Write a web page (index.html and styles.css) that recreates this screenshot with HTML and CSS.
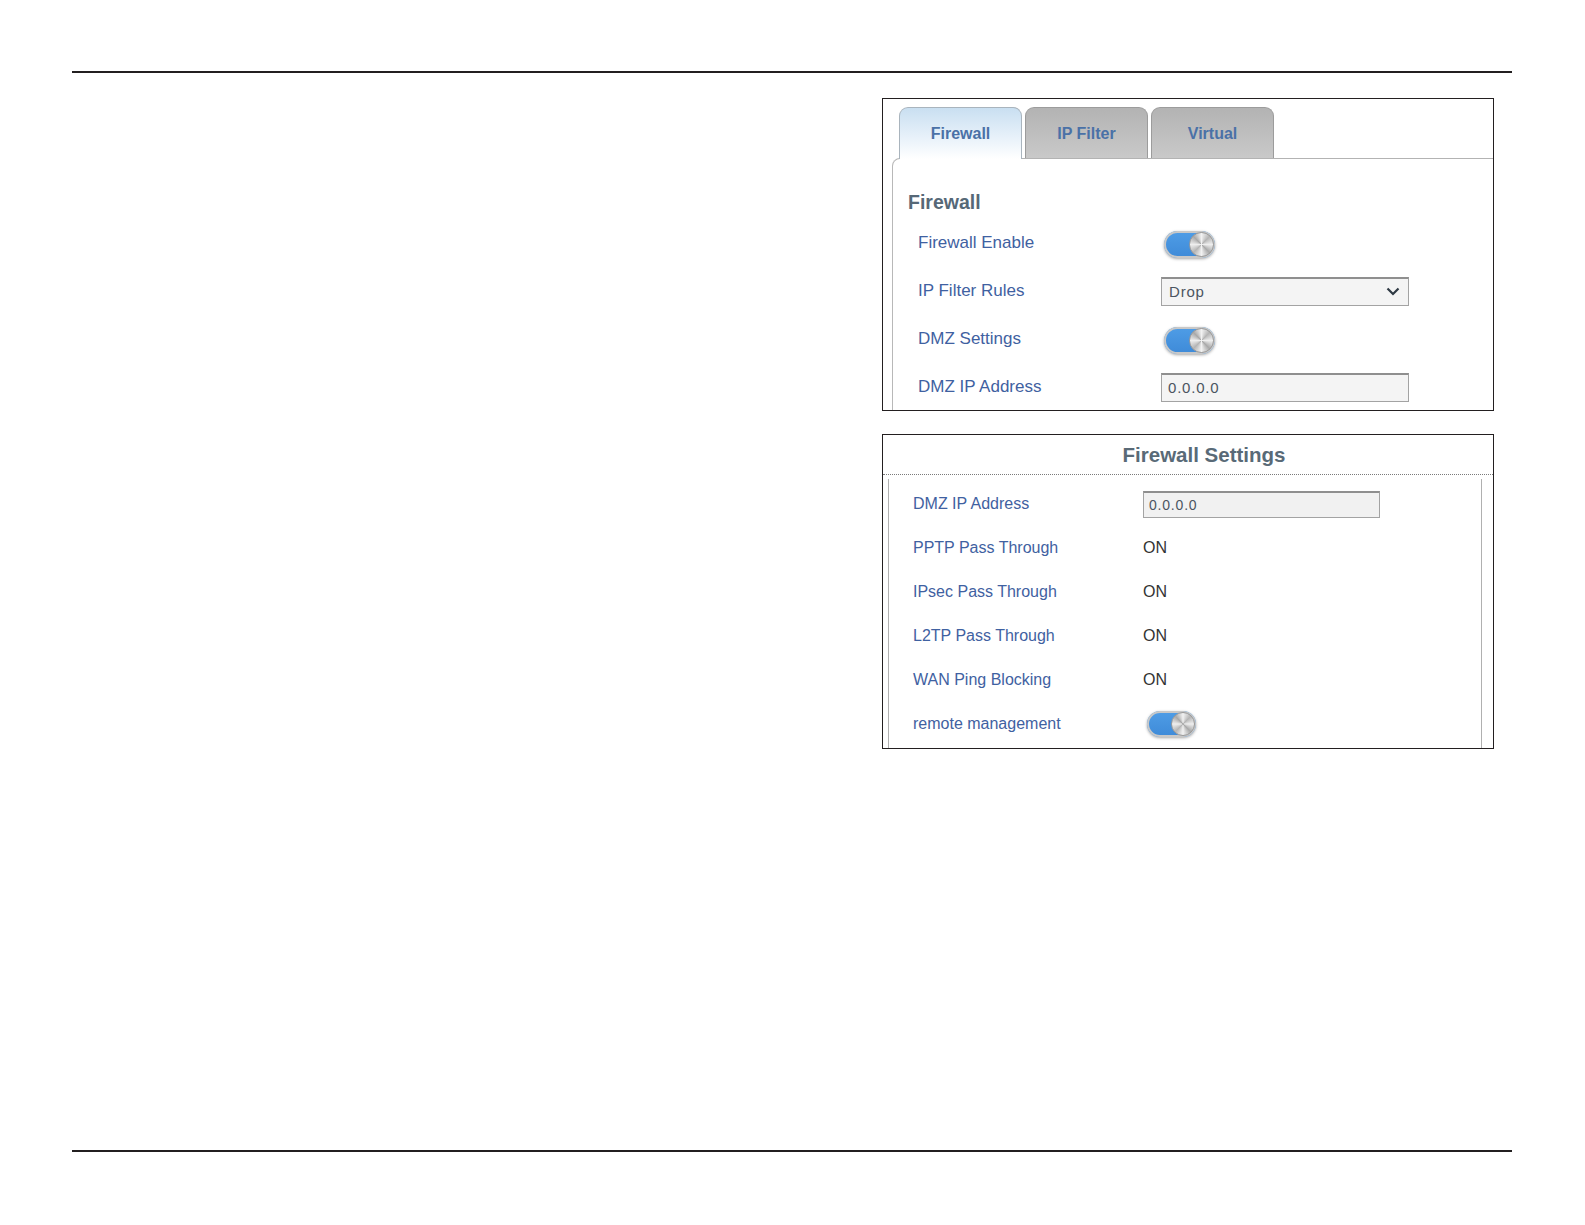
FILE: index.html
```html
<!DOCTYPE html>
<html lang="en">

<head>
    <meta charset="UTF-8">
    <meta name="viewport" content="width=device-width, initial-scale=1.0">
    <title>Firewall</title>

    <link rel="stylesheet" href="styles.css">

</head>

<body>

    <div class="page">
        <div class="rule"></div>

        <div class="main">
            <div class="shots">

                <!-- firewall tab -->
                <div class="shot shot-tabs">
                    <div class="tabs">
                        <div class="tab active"> Firewall </div>
                        <div class="tab"> IP Filter </div>
                        <div class="tab"> Virtual </div>
                        <div class="tab-fill"></div>
                    </div>
                    <div class="tab-body">
                        <h2> Firewall </h2>
                        <div class="row">
                            <span class="label"> Firewall Enable </span>
                            <span class="toggle"><span class="knob"></span></span>
                        </div>
                        <div class="row">
                            <span class="label"> IP Filter Rules </span>
                            <div class="field select">
                                <span> Drop </span>
                                <svg width="14" height="9" viewBox="0 0 14 9">
                                    <path d="M1.5 1.5 L7 7 L12.5 1.5" fill="none" stroke="#2f3a44" stroke-width="2.2" />
                                </svg>
                            </div>
                        </div>
                        <div class="row">
                            <span class="label"> DMZ Settings </span>
                            <span class="toggle"><span class="knob"></span></span>
                        </div>
                        <div class="row">
                            <span class="label"> DMZ IP Address </span>
                            <div class="field"> 0.0.0.0 </div>
                        </div>
                    </div>
                </div>

                <!-- firewall settings summary -->
                <div class="shot shot-settings">
                    <div class="settings-head"> Firewall Settings </div>
                    <div class="settings-body">
                        <div class="srow">
                            <span class="label"> DMZ IP Address </span>
                            <div class="field small"> 0.0.0.0 </div>
                        </div>
                        <div class="srow">
                            <span class="label"> PPTP Pass Through </span>
                            <span class="value"> ON </span>
                        </div>
                        <div class="srow">
                            <span class="label"> IPsec Pass Through </span>
                            <span class="value"> ON </span>
                        </div>
                        <div class="srow">
                            <span class="label"> L2TP Pass Through </span>
                            <span class="value"> ON </span>
                        </div>
                        <div class="srow">
                            <span class="label"> WAN Ping Blocking </span>
                            <span class="value"> ON </span>
                        </div>
                        <div class="srow">
                            <span class="label"> remote management </span>
                            <span class="toggle"><span class="knob"></span></span>
                        </div>
                    </div>
                </div>

            </div>
        </div>

        <div class="rule"></div>
    </div>

</body>

</html>
```

FILE: styles.css
```css
body {
    margin: 0;
    background: #ffffff;
    font-family: "Liberation Sans", Arial, sans-serif;
}

.page {
    padding: 71px 73px 0 72px;
}

.rule {
    height: 2px;
    background: #231f20;
}

.main {
    height: 1077px;
    display: flex;
    justify-content: flex-end;
    padding: 25px 18px 0 0;
    box-sizing: border-box;
}

.shots {
    width: 612px;
    display: flex;
    flex-direction: column;
    gap: 23px;
}

.shot {
    border: 1px solid #231f20;
    overflow: hidden;
    box-sizing: border-box;
}

.label {
    color: #3f61a1;
}

/* tabs */

.shot-tabs {
    height: 313px;
    padding-top: 8px;
}

.tabs {
    display: flex;
    align-items: flex-start;
    gap: 3px;
    padding-left: 16px;
    height: 51px;
}

.tab {
    width: 123px;
    height: 51px;
    box-sizing: border-box;
    border: 1px solid #9c9c9c;
    border-bottom: none;
    border-radius: 9px 9px 0 0;
    background: linear-gradient(#b3b3b3, #c9c9c9);
    color: #4a71a7;
    font-size: 16px;
    font-weight: bold;
    display: flex;
    justify-content: center;
    align-items: center;
    padding-top: 1px;
}

.tab.active {
    position: relative;
    z-index: 1;
    height: 52px;
    padding-bottom: 1px;
    border-color: #a9b4bd;
    background: linear-gradient(#c9dff1, #e9f2fa 60%, #ffffff);
}

.tab-fill {
    flex: 1;
}

.tab-body {
    margin-left: 9px;
    height: 260px;
    border-top: 1px solid #b3b3b3;
    border-left: 1px solid #b8b8b8;
    border-top-left-radius: 8px;
    padding: 31px 0 0 15px;
}

.tab-body h2 {
    margin: 0 0 5px 0;
    font-size: 19.5px;
    line-height: 24px;
    color: #566877;
}

.tab-body .row {
    display: flex;
    align-items: center;
    height: 48px;
    padding-left: 10px;
    font-size: 17px;
}

.tab-body .row .label {
    width: 243px;
}

/* switch */

.toggle {
    width: 51px;
    height: 27px;
    margin: 3px 0 0 3px;
    border-radius: 14px;
    box-sizing: border-box;
    padding: 1px;
    display: flex;
    justify-content: flex-end;
    align-items: center;
    background: linear-gradient(#4f9de6, #3e8ad8);
    box-shadow: inset 0 0 0 2px #c8c8c8, 0 1px 3px rgba(0, 0, 0, 0.35);
}

.knob {
    width: 25px;
    height: 25px;
    border-radius: 50%;
    box-sizing: border-box;
    border: 1px solid #9a9a9a;
    background: conic-gradient(#f2f2f2, #b5b5b5, #eeeeee, #a9a9a9, #f2f2f2, #b5b5b5, #eeeeee, #a9a9a9, #f2f2f2);
}

/* text fields */

.field {
    width: 248px;
    height: 29px;
    box-sizing: border-box;
    border: 1px solid #a3a3a3;
    border-top: 2px solid #8f8f8f;
    background: #f4f4f4;
    color: #4b5561;
    font-size: 15px;
    letter-spacing: 0.8px;
    display: flex;
    align-items: center;
    justify-content: space-between;
    padding: 0 8px 0 6px;
}

.field.select {
    padding-left: 7px;
}

.field.small {
    width: 237px;
    height: 27px;
    font-size: 14px;
    padding-left: 5px;
    background: #f1f1f1;
}

/* settings summary */

.shot-settings {
    height: 315px;
}

.settings-head {
    height: 39px;
    border-bottom: 1px dotted #7a7a7a;
    display: flex;
    justify-content: center;
    align-items: center;
    padding-left: 32px;
    font-size: 20.5px;
    font-weight: bold;
    color: #596a77;
}

.settings-body {
    margin: 4px 11px 0 5px;
    height: 300px;
    border-left: 1px solid #b0b0b0;
    border-right: 1px solid #b0b0b0;
    padding: 3px 0 0 24px;
}

.srow {
    display: flex;
    align-items: center;
    height: 44px;
    font-size: 16px;
}

.srow .label {
    width: 230px;
}

.srow .value {
    color: #333333;
}

.srow .toggle {
    width: 49px;
    height: 26px;
    margin: 0 0 0 4px;
}

.srow .toggle .knob {
    width: 24px;
    height: 24px;
}
```
